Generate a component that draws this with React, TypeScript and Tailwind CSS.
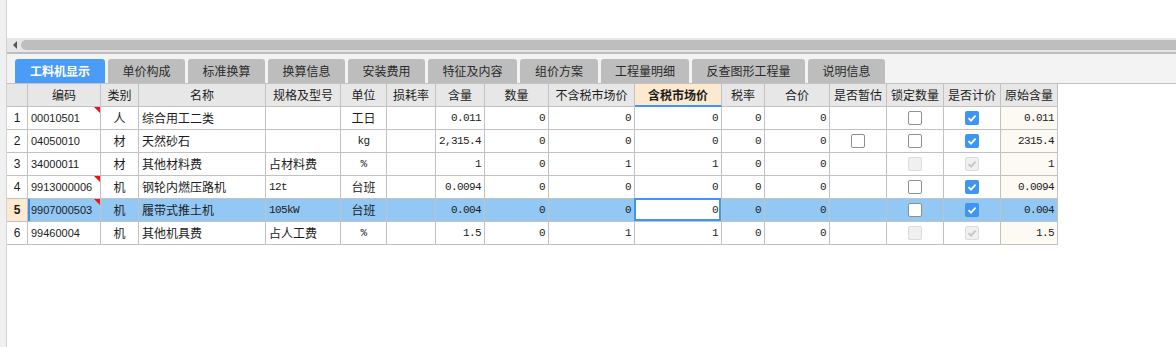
import React from 'react'

const cjk = "font-['Noto_Sans_CJK_SC',sans-serif]"
const mono = "font-['Liberation_Mono',monospace] text-[11px] tracking-[-0.6px]"
const sans = "font-['Liberation_Sans','Noto_Sans_CJK_SC',sans-serif]"

const tabs = [
  { label: '工料机显示', w: 'w-[90px]', active: true },
  { label: '单价构成', w: 'w-[77px]' },
  { label: '标准换算', w: 'w-[77px]' },
  { label: '换算信息', w: 'w-[77px]' },
  { label: '安装费用', w: 'w-[77px]' },
  { label: '特征及内容', w: 'w-[89px]' },
  { label: '组价方案', w: 'w-[78px]' },
  { label: '工程量明细', w: 'w-[88px]' },
  { label: '反查图形工程量', w: 'w-[113px]' },
  { label: '说明信息', w: 'w-[77px]' },
]

const cols = [
  { title: '', w: 'w-[21px]' },
  { title: '编码', w: 'w-[73px]' },
  { title: '类别', w: 'w-[38px]' },
  { title: '名称', w: 'w-[127px]' },
  { title: '规格及型号', w: 'w-[75px]' },
  { title: '单位', w: 'w-[46px]' },
  { title: '损耗率', w: 'w-[49px]' },
  { title: '含量', w: 'w-[49px]' },
  { title: '数量', w: 'w-[64px]' },
  { title: '不含税市场价', w: 'w-[86px]' },
  { title: '含税市场价', w: 'w-[87px]' },
  { title: '税率', w: 'w-[43px]' },
  { title: '合价', w: 'w-[65px]' },
  { title: '是否暂估', w: 'w-[57px]' },
  { title: '锁定数量', w: 'w-[57px]' },
  { title: '是否计价', w: 'w-[57px]' },
  { title: '原始含量', w: 'w-[57px]' },
]

type Box = 'none' | 'empty' | 'checked' | 'disabled' | 'disabledChecked'

type Row = {
  code: string
  type: string
  name: string
  spec: string
  specMono?: boolean
  unit: string
  unitMono?: boolean
  qty: string
  count: string
  priceEx: string
  priceIn: string
  tax: string
  total: string
  est: Box
  lock: Box
  price: Box
  orig: string
  mark?: boolean
}

const rows: Row[] = [
  { code: '00010501', type: '人', name: '综合用工二类', spec: '', unit: '工日', qty: '0.011', count: '0', priceEx: '0', priceIn: '0', tax: '0', total: '0', est: 'none', lock: 'empty', price: 'checked', orig: '0.011', mark: true },
  { code: '04050010', type: '材', name: '天然砂石', spec: '', unit: 'kg', unitMono: true, qty: '2,315.4', count: '0', priceEx: '0', priceIn: '0', tax: '0', total: '0', est: 'empty', lock: 'empty', price: 'checked', orig: '2315.4' },
  { code: '34000011', type: '材', name: '其他材料费', spec: '占材料费', unit: '%', unitMono: true, qty: '1', count: '0', priceEx: '1', priceIn: '1', tax: '0', total: '0', est: 'none', lock: 'disabled', price: 'disabledChecked', orig: '1' },
  { code: '9913000006', type: '机', name: '钢轮内燃压路机', spec: '12t', specMono: true, unit: '台班', qty: '0.0094', count: '0', priceEx: '0', priceIn: '0', tax: '0', total: '0', est: 'none', lock: 'empty', price: 'checked', orig: '0.0094', mark: true },
  { code: '9907000503', type: '机', name: '履带式推土机', spec: '105kW', specMono: true, unit: '台班', qty: '0.004', count: '0', priceEx: '0', priceIn: '0', tax: '0', total: '0', est: 'none', lock: 'empty', price: 'checked', orig: '0.004', mark: true },
  { code: '99460004', type: '机', name: '其他机具费', spec: '占人工费', unit: '%', unitMono: true, qty: '1.5', count: '0', priceEx: '1', priceIn: '1', tax: '0', total: '0', est: 'none', lock: 'disabled', price: 'disabledChecked', orig: '1.5' },
]

function Check({ kind }: { kind: Box }) {
  if (kind === 'none') return null
  if (kind === 'empty')
    return <div className="h-[14px] w-[14px] rounded-[2px] border border-[#8f8f8f] bg-white" />
  if (kind === 'disabled')
    return <div className="h-[14px] w-[14px] rounded-[2px] border border-[#dcdcdc] bg-[#f0f0f0]" />
  const on = kind === 'checked'
  return (
    <div
      className={
        on
          ? 'flex h-[14px] w-[14px] items-center justify-center rounded-[2px] bg-[#3f95f2]'
          : 'flex h-[14px] w-[14px] items-center justify-center rounded-[2px] border border-[#dcdcdc] bg-[#f0f0f0]'
      }
    >
      <svg width="10" height="10" viewBox="0 0 10 10">
        <path d="M1.5 5.2 L4 7.6 L8.6 2.6" fill="none" stroke={on ? '#ffffff' : '#c4c4c4'} strokeWidth="1.8" />
      </svg>
    </div>
  )
}

function Cell({
  w,
  className = '',
  children,
}: {
  w: string
  className?: string
  children?: React.ReactNode
}) {
  return (
    <div className={`relative flex h-[23px] shrink-0 items-center border-r border-b border-[#c2c2c2] ${w} ${className}`}>
      {children}
    </div>
  )
}

export default function App() {
  return (
    <div className="flex h-[347px] w-[1176px] overflow-hidden bg-white text-[#1c1c1c]">
      <div className="h-full w-[7px] shrink-0 border-r border-[#d2d2d2] bg-[#f0f0f0]" />
      <div className="flex min-w-0 flex-1 flex-col">
        <div className="h-[38px] shrink-0 bg-white" />
        {/* scrollbar */}
        <div className="flex h-[14px] shrink-0 items-center border-t-2 border-b-2 border-[#e6e6e6] bg-[#e6e6e6]">
          <div className="flex w-[14px] shrink-0 items-center justify-center">
            <div className="ml-[2px] h-0 w-0 border-y-[4px] border-r-[4px] border-y-transparent border-r-[#555]" />
          </div>
          <div className="h-[10px] flex-1 rounded-l-full bg-[#bebebe]" />
        </div>
        <div className="h-[2px] shrink-0 bg-[#bebebe]" />
        {/* tabs */}
        <div className="flex h-[30px] shrink-0 items-end gap-[3px] border-b border-[#c2c2c2] bg-[#f3f3f3] pl-[8px]">
          {tabs.map((t) => (
            <div
              key={t.label}
              className={
                t.active
                  ? `flex h-[24px] ${t.w} items-center justify-center rounded-t-[3px] bg-[#4a9cf6] text-[12px] font-bold text-white ${cjk}`
                  : `flex h-[24px] ${t.w} items-center justify-center rounded-t-[3px] bg-[#bdbdbd] text-[12px] text-[#2a2a2a] ${cjk}`
              }
            >
              {t.label}
            </div>
          ))}
        </div>
        {/* header */}
        <div className="flex shrink-0">
          {cols.map((c, i) => (
            <Cell
              key={i}
              w={c.w}
              className={
                i === 10
                  ? `justify-center bg-[#fde9cd] text-[12px] font-bold ${cjk} border-b-2 border-b-[#3f95f2]`
                  : `justify-center bg-[#e7e7e7] text-[12px] ${cjk}`
              }
            >
              {c.title}
            </Cell>
          ))}
        </div>
        {/* rows */}
        {rows.map((r, i) => {
          const sel = i === 4
          const bg = sel ? 'bg-[#93c7f4]' : 'bg-white'
          const num = `justify-end pr-[3px] ${mono} ${bg}`
          return (
            <div key={r.code} className="flex shrink-0">
              <Cell
                w={cols[0].w}
                className={
                  sel
                    ? `justify-center bg-[#fde9cd] text-[12px] font-bold ${sans}`
                    : `justify-center bg-white text-[12px] ${sans}`
                }
              >
                {i + 1}
              </Cell>
              <Cell w={cols[1].w} className={`pl-[3px] text-[11px] ${sans} ${bg}`}>
                {sel && <div className="absolute top-0 bottom-0 left-0 w-[2px] bg-[#3f8ee8]" />}
                {r.code}
                {r.mark && <div className="absolute top-0 right-0 h-[6px] w-[6px] bg-[#f01010] [clip-path:polygon(0_0,100%_0,100%_100%)]" />}
              </Cell>
              <Cell w={cols[2].w} className={`justify-center text-[12px] ${cjk} ${bg}`}>
                {r.type}
              </Cell>
              <Cell w={cols[3].w} className={`pl-[3px] text-[12px] ${cjk} ${bg}`}>
                {r.name}
              </Cell>
              <Cell
                w={cols[4].w}
                className={r.specMono ? `pl-[3px] ${mono} ${bg}` : `pl-[3px] text-[12px] ${cjk} ${bg}`}
              >
                {r.spec}
              </Cell>
              <Cell
                w={cols[5].w}
                className={r.unitMono ? `justify-center ${mono} ${bg}` : `justify-center text-[12px] ${cjk} ${bg}`}
              >
                {r.unit}
              </Cell>
              <Cell w={cols[6].w} className={bg} />
              <Cell w={cols[7].w} className={num}>
                {r.qty}
              </Cell>
              <Cell w={cols[8].w} className={num}>
                {r.count}
              </Cell>
              <Cell w={cols[9].w} className={num}>
                {r.priceEx}
              </Cell>
              <Cell w={cols[10].w} className={`justify-end pr-[3px] ${mono} bg-white`}>
                {sel && <div className="absolute -top-px -left-px right-0 bottom-0 border-2 border-[#3f95f2]" />}
                {r.priceIn}
              </Cell>
              <Cell w={cols[11].w} className={num}>
                {r.tax}
              </Cell>
              <Cell w={cols[12].w} className={num}>
                {r.total}
              </Cell>
              <Cell w={cols[13].w} className={`justify-center ${bg}`}>
                <Check kind={r.est} />
              </Cell>
              <Cell w={cols[14].w} className={`justify-center ${bg}`}>
                <Check kind={r.lock} />
              </Cell>
              <Cell w={cols[15].w} className={`justify-center ${bg}`}>
                <Check kind={r.price} />
              </Cell>
              <Cell
                w={cols[16].w}
                className={`justify-end pr-[3px] ${mono} ${sel ? 'bg-[#93c7f4]' : 'bg-[#fdf9f3]'}`}
              >
                {r.orig}
              </Cell>
            </div>
          )
        })}
      </div>
    </div>
  )
}
